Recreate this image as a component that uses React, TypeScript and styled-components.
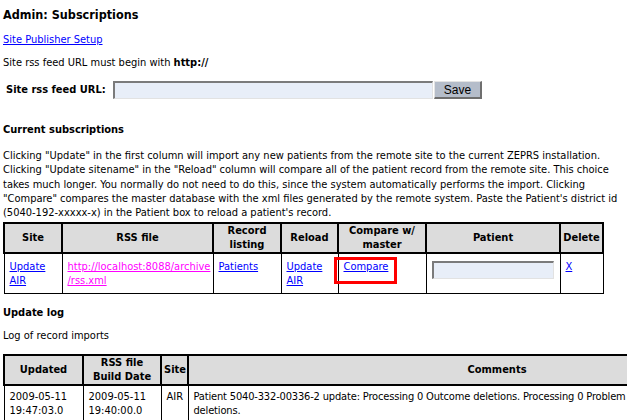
import React from "react";
import styled, { createGlobalStyle } from "styled-components";

const Global = createGlobalStyle`
  html, body { margin: 0; padding: 0; overflow: hidden; background: #fff; }
  body {
    font-family: "DejaVu Sans Condensed", "Liberation Sans", sans-serif;
    font-size: 11px;
    line-height: 14px;
    color: #000;
  }
  #root { width: 627px; height: 420px; overflow: hidden; }
`;

const Page = styled.div`
  padding: 0 3px;
`;

const Title = styled.h1`
  margin: 7px 0 0;
  font-size: 12.5px;
  line-height: 16px;
  font-weight: bold;
`;

const Link = styled.a<{ $color?: string }>`
  color: ${(p) => p.$color || "#0000ff"};
  text-decoration: underline;
  cursor: pointer;
`;

const TopLink = styled(Link)`
  display: inline-block;
  margin-top: 10px;
`;

const Note = styled.p<{ $mt: number }>`
  margin: ${(p) => p.$mt}px 0 0;
`;

const Form = styled.form`
  display: flex;
  align-items: center;
  height: 18px;
  margin-top: 11px;
  padding-left: 3px;
`;

const Label = styled.label`
  width: 107px;
  font-weight: bold;
`;

const TextInput = styled.input<{ $w: number }>`
  box-sizing: border-box;
  width: ${(p) => p.$w}px;
  height: 18px;
  margin: 0;
  padding: 0 2px;
  background: #e8eef8;
  border-style: solid;
  border-width: 2px 1px 1px 2px;
  border-color: #7b7b7b #e2e2e2 #e2e2e2 #7b7b7b;
  outline: none;
  font: inherit;
`;

const SaveButton = styled.button`
  box-sizing: border-box;
  width: 48px;
  height: 18px;
  margin: 0 0 0 1px;
  padding: 0;
  background: #b5bdca;
  border-style: solid;
  border-width: 1px 2px 2px 1px;
  border-color: #e4e4e4 #6f6f6f #6f6f6f #e4e4e4;
  font-family: "Liberation Sans", Arial, sans-serif;
  font-size: 12px;
  color: #000;
`;

const Heading = styled.h2<{ $mt: number }>`
  margin: ${(p) => p.$mt}px 0 0;
  font-size: 11px;
  line-height: 14px;
  font-weight: bold;
`;

const Description = styled.p`
  margin: 12px 0 0;
  line-height: 14.25px;
`;

const Table = styled.table<{ $w: number; $mt: number }>`
  border-collapse: collapse;
  table-layout: fixed;
  width: ${(p) => p.$w}px;
  margin-top: ${(p) => p.$mt}px;
`;

const Th = styled.th`
  background: #dcdcdc;
  border: 2px solid #000;
  padding: 0 2px;
  height: 28px;
  text-align: center;
  vertical-align: middle;
  font-weight: bold;
  line-height: 14px;
`;

const Td = styled.td<{ $pt: number; $pb?: number }>`
  position: relative;
  border: 1px solid #000;
  padding: ${(p) => p.$pt}px 4px ${(p) => p.$pb ?? 5}px 5px;
  vertical-align: top;
  text-align: left;
  line-height: 14px;
`;

const Highlight = styled.div`
  position: absolute;
  left: -5px;
  top: 3px;
  width: 63px;
  height: 27px;
  box-sizing: border-box;
  border: 3px solid #ff0000;
  pointer-events: none;
`;

const CommentText = styled.span`
  display: block;
  max-width: 470px;
  letter-spacing: -0.16px;
`;

export default function App() {
  return (
    <>
      <Global />
      <Page>
        <Title>Admin: Subscriptions</Title>
        <TopLink>Site Publisher Setup</TopLink>
        <Note $mt={9}>
          Site rss feed URL must begin with <b>http://</b>
        </Note>
        <Form onSubmit={(e) => e.preventDefault()}>
          <Label>Site rss feed URL:</Label>
          <TextInput $w={320} type="text" />
          <SaveButton type="submit">Save</SaveButton>
        </Form>

        <Heading $mt={24}>Current subscriptions</Heading>
        <Description>
          Clicking "Update" in the first column will import any new patients from the remote site to the current ZEPRS
          installation. Clicking "Update sitename" in the "Reload" column will compare all of the patient record from
          the remote site. This choice takes much longer. You normally do not need to do this, since the system
          automatically performs the import. Clicking "Compare" compares the master database with the xml files
          generated by the remote system. Paste the Patient's district id (5040-192-xxxxx-x) in the Patient box to
          reload a patient's record.
        </Description>

        <Table $w={599} $mt={2}>
          <colgroup>
            <col style={{ width: 58 }} />
            <col style={{ width: 151 }} />
            <col style={{ width: 68 }} />
            <col style={{ width: 57 }} />
            <col style={{ width: 88 }} />
            <col style={{ width: 134 }} />
            <col style={{ width: 43 }} />
          </colgroup>
          <thead>
            <tr>
              <Th>Site</Th>
              <Th>RSS file</Th>
              <Th>Record listing</Th>
              <Th>Reload</Th>
              <Th>Compare w/ master</Th>
              <Th>Patient</Th>
              <Th>Delete</Th>
            </tr>
          </thead>
          <tbody>
            <tr>
              <Td $pt={6}>
                <Link>Update AIR</Link>
              </Td>
              <Td $pt={6}>
                <Link $color="#ff00ff">
                  http://localhost:8088/archive<wbr />/rss.xml
                </Link>
              </Td>
              <Td $pt={6}>
                <Link>Patients</Link>
              </Td>
              <Td $pt={6}>
                <Link>Update AIR</Link>
              </Td>
              <Td $pt={6}>
                <Link>Compare</Link>
                <Highlight />
              </Td>
              <Td $pt={7}>
                <TextInput $w={122} type="text" />
              </Td>
              <Td $pt={6}>
                <Link>X</Link>
              </Td>
            </tr>
          </tbody>
        </Table>

        <Heading $mt={12}>Update log</Heading>
        <Note $mt={9}>Log of record imports</Note>

        <Table $w={802} $mt={11}>
          <colgroup>
            <col style={{ width: 79 }} />
            <col style={{ width: 78 }} />
            <col style={{ width: 27 }} />
            <col style={{ width: 618 }} />
          </colgroup>
          <thead>
            <tr>
              <Th>Updated</Th>
              <Th>RSS file Build Date</Th>
              <Th>Site</Th>
              <Th>Comments</Th>
            </tr>
          </thead>
          <tbody>
            <tr>
              <Td $pt={4}>2009-05-11 19:47:03.0</Td>
              <Td $pt={4}>2009-05-11 19:40:00.0</Td>
              <Td $pt={4}>AIR</Td>
              <Td $pt={4}>
                <CommentText>
                  Patient 5040-332-00336-2 update: Processing 0 Outcome deletions. Processing 0 Problem deletions.
                </CommentText>
              </Td>
            </tr>
          </tbody>
        </Table>
      </Page>
    </>
  );
}
